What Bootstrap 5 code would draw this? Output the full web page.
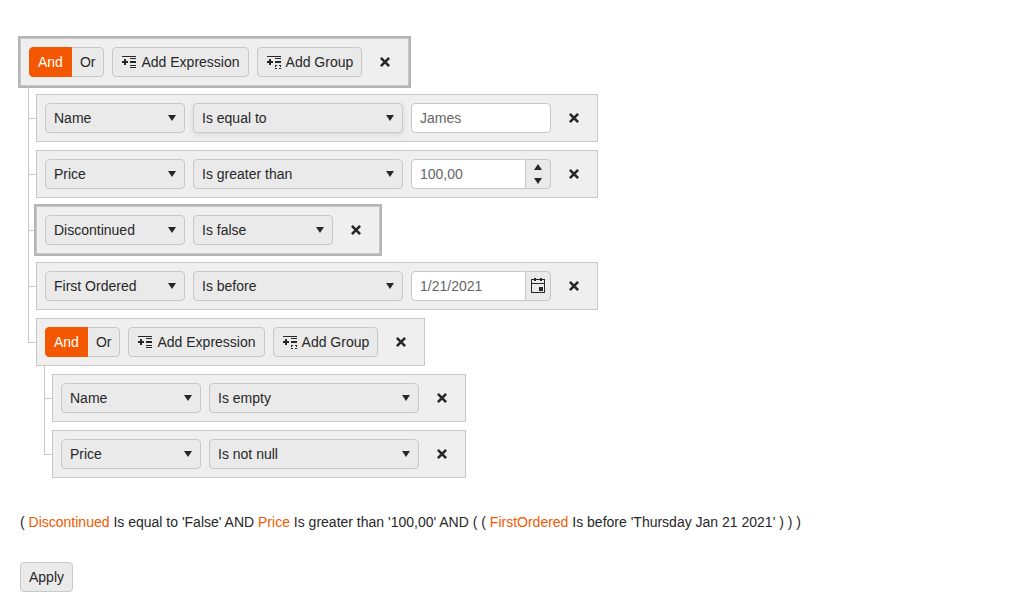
<!DOCTYPE html>
<html lang="en">
<head>
<meta charset="utf-8">
<meta name="viewport" content="width=device-width, initial-scale=1">
<title>Filter</title>
<link href="https://cdn.jsdelivr.net/npm/bootstrap@5.3.0/dist/css/bootstrap.min.css" rel="stylesheet">
<style>
  :root { --line: #c8c8c8; --accent: #f35800; --ink: #272727; }
  body { font-family: "Liberation Sans", Arial, sans-serif; font-size: 14px; line-height: 20px; color: var(--ink); background: #fff; }
  .page { padding: 38px 20px 20px; }

  /* rows */
  .bar { display: inline-flex; gap: 8px; padding: 8px; background: #efefef; border: 1px solid var(--line); vertical-align: top; position: relative; }
  .bar.focused { box-shadow: 0 0 0 2px #b4b4b4; }

  /* tree lines */
  .branch { margin: 0; padding: 0 0 0 16px; list-style: none; }
  .branch > li { position: relative; padding-top: 8px; }
  .branch > li::before { content: ""; position: absolute; left: -8px; top: 0; width: 8px; height: 33px; border: solid var(--line); border-width: 0 0 1px 1px; }
  .branch > li:not(:last-child)::after { content: ""; position: absolute; left: -8px; top: 0; bottom: 0; border-left: 1px solid var(--line); }

  /* controls */
  .btn {
    --bs-btn-font-size: 14px; --bs-btn-line-height: 20px; --bs-btn-padding-x: 8px; --bs-btn-padding-y: 4px;
    --bs-btn-border-radius: 4px; --bs-btn-color: var(--ink); --bs-btn-bg: #eaeaea; --bs-btn-border-color: var(--line);
    --bs-btn-hover-color: var(--ink); --bs-btn-hover-bg: #e0e0e0; --bs-btn-hover-border-color: var(--line);
    --bs-btn-active-color: #fff; --bs-btn-active-bg: var(--accent); --bs-btn-active-border-color: var(--accent);
  }
  .btn svg { flex: none; }
  .btn-remove { --bs-btn-bg: transparent; --bs-btn-border-color: transparent; --bs-btn-padding-x: 6px; }
  .form-select, .form-control { height: 30px; padding: 4px 8px; font-size: 14px; line-height: 20px; border: 1px solid var(--line); border-radius: 4px; }
  .form-select {
    width: 140px; padding-right: 24px; color: var(--ink); background-color: #eaeaea;
    background-image: url("data:image/svg+xml,%3csvg xmlns='http://www.w3.org/2000/svg' viewBox='0 0 16 16'%3e%3cpath fill='%23272727' d='M4 5h8l-4 6z'/%3e%3c/svg%3e");
    background-size: 16px 16px; background-position: right 4px center;
  }
  .form-select.wide { width: 210px; }
  .form-select.raised { box-shadow: 0 2px 6px rgba(0, 0, 0, .09); }
  .form-control, .form-control:focus { color: #666; background: #fff; }
  .field { width: 140px; }
  .input-group .addon { width: 26px; background: #eaeaea; border: 1px solid var(--line); border-radius: 0 4px 4px 0; padding: 0; color: var(--ink); margin-left: -1px; overflow: hidden; }
  .spin { display: flex; align-items: center; justify-content: center; height: 14px; width: 100%; padding: 0; border: 0; background: transparent; color: inherit; }
  .accent { color: var(--accent); text-decoration: none; }
  .preview { margin: 34px 0 30px; }
</style>
</head>
<body>
<svg class="d-none" aria-hidden="true">
  <symbol id="i-expr" viewBox="0 0 16 16"><path fill="currentColor" d="M1 2h14v1H1zM3 5h2v2h2v2H5v2H3V9H1V7h2zM9 4h6v1H9zM9 7h6v2H9zM9 11h6v1H9zM9 13h6v1H9z"/></symbol>
  <symbol id="i-group" viewBox="0 0 16 16"><path fill="currentColor" d="M1 2h14v1H1zM3 5h2v2h2v2H5v2H3V9H1V7h2zM9 4h6v1H9zM9 7h6v2H9zM9 11h2v1h-1v1H9zM9 14h1v0h1v1H9zM13 11h2v2h-1v-1h-1zM13 14h2v1h-2z"/></symbol>
  <symbol id="i-x" viewBox="0 0 16 16"><path fill="none" stroke="currentColor" stroke-width="2.6" d="M3.9 3.9l8.2 8.2M12.1 3.9l-8.2 8.2"/></symbol>
  <symbol id="i-cal" viewBox="0 0 16 16"><path fill="currentColor" fill-rule="evenodd" d="M1 1h3V0h2v1h4V0h2v1h3v14H1zM2 2v3h12V2h-2v1h-2V2H6v1H4V2zM2 6v8h12V6zM9 9h4v4H9z"/></symbol>
</svg>

<main class="page">
  <div class="bar focused" role="toolbar" aria-label="Root group">
    <div class="btn-group" role="group" aria-label="Logic">
      <button type="button" class="btn active" aria-pressed="true">And</button>
      <button type="button" class="btn" aria-pressed="false">Or</button>
    </div>
    <button type="button" class="btn d-flex align-items-center gap-1"><svg width="16" height="16"><use href="#i-expr"/></svg>Add Expression</button>
    <button type="button" class="btn d-flex align-items-center gap-1"><svg width="16" height="16"><use href="#i-group"/></svg>Add Group</button>
    <button type="button" class="btn btn-remove d-flex align-items-center" aria-label="Remove"><svg width="16" height="16"><use href="#i-x"/></svg></button>
  </div>

  <ul class="branch">
    <li>
      <div class="bar" role="toolbar">
        <select class="form-select" aria-label="Field"><option>Name</option></select>
        <select class="form-select wide raised" aria-label="Operator"><option>Is equal to</option></select>
        <input type="text" class="form-control field" aria-label="Value" value="James">
        <button type="button" class="btn btn-remove d-flex align-items-center" aria-label="Remove"><svg width="16" height="16"><use href="#i-x"/></svg></button>
      </div>
    </li>
    <li>
      <div class="bar" role="toolbar">
        <select class="form-select" aria-label="Field"><option>Price</option></select>
        <select class="form-select wide" aria-label="Operator"><option>Is greater than</option></select>
        <div class="input-group flex-nowrap field">
          <input type="text" inputmode="decimal" class="form-control" aria-label="Value" value="100,00">
          <div class="addon flex-shrink-0">
            <button type="button" class="spin" aria-label="Increase"><svg width="8" height="6"><path fill="currentColor" d="M0 6h8L4 0z"/></svg></button>
            <button type="button" class="spin" aria-label="Decrease"><svg width="8" height="6"><path fill="currentColor" d="M0 0h8L4 6z"/></svg></button>
          </div>
        </div>
        <button type="button" class="btn btn-remove d-flex align-items-center" aria-label="Remove"><svg width="16" height="16"><use href="#i-x"/></svg></button>
      </div>
    </li>
    <li>
      <div class="bar focused" role="toolbar">
        <select class="form-select" aria-label="Field"><option>Discontinued</option></select>
        <select class="form-select" aria-label="Operator"><option>Is false</option></select>
        <button type="button" class="btn btn-remove d-flex align-items-center" aria-label="Remove"><svg width="16" height="16"><use href="#i-x"/></svg></button>
      </div>
    </li>
    <li>
      <div class="bar" role="toolbar">
        <select class="form-select" aria-label="Field"><option>First Ordered</option></select>
        <select class="form-select wide" aria-label="Operator"><option>Is before</option></select>
        <div class="input-group flex-nowrap field">
          <input type="text" class="form-control" aria-label="Value" value="1/21/2021">
          <button type="button" class="addon flex-shrink-0 d-flex align-items-center justify-content-center" aria-label="Open calendar"><svg width="16" height="16"><use href="#i-cal"/></svg></button>
        </div>
        <button type="button" class="btn btn-remove d-flex align-items-center" aria-label="Remove"><svg width="16" height="16"><use href="#i-x"/></svg></button>
      </div>
    </li>
    <li>
      <div class="bar" role="toolbar" aria-label="Nested group">
        <div class="btn-group" role="group" aria-label="Logic">
          <button type="button" class="btn active" aria-pressed="true">And</button>
          <button type="button" class="btn" aria-pressed="false">Or</button>
        </div>
        <button type="button" class="btn d-flex align-items-center gap-1"><svg width="16" height="16"><use href="#i-expr"/></svg>Add Expression</button>
        <button type="button" class="btn d-flex align-items-center gap-1"><svg width="16" height="16"><use href="#i-group"/></svg>Add Group</button>
        <button type="button" class="btn btn-remove d-flex align-items-center" aria-label="Remove"><svg width="16" height="16"><use href="#i-x"/></svg></button>
      </div>
      <ul class="branch">
        <li>
          <div class="bar" role="toolbar">
            <select class="form-select" aria-label="Field"><option>Name</option></select>
            <select class="form-select wide" aria-label="Operator"><option>Is empty</option></select>
            <button type="button" class="btn btn-remove d-flex align-items-center" aria-label="Remove"><svg width="16" height="16"><use href="#i-x"/></svg></button>
          </div>
        </li>
        <li>
          <div class="bar" role="toolbar">
            <select class="form-select" aria-label="Field"><option>Price</option></select>
            <select class="form-select wide" aria-label="Operator"><option>Is not null</option></select>
            <button type="button" class="btn btn-remove d-flex align-items-center" aria-label="Remove"><svg width="16" height="16"><use href="#i-x"/></svg></button>
          </div>
        </li>
      </ul>
    </li>
  </ul>

  <p class="preview">( <span class="accent">Discontinued</span> Is equal to 'False' AND <span class="accent">Price</span> Is greater than '100,00' AND ( ( <span class="accent">FirstOrdered</span> Is before 'Thursday Jan 21 2021' ) ) )</p>
  <button type="button" class="btn">Apply</button>
</main>
<script src="https://cdn.jsdelivr.net/npm/bootstrap@5.3.0/dist/js/bootstrap.bundle.min.js"></script>
</body>
</html>
